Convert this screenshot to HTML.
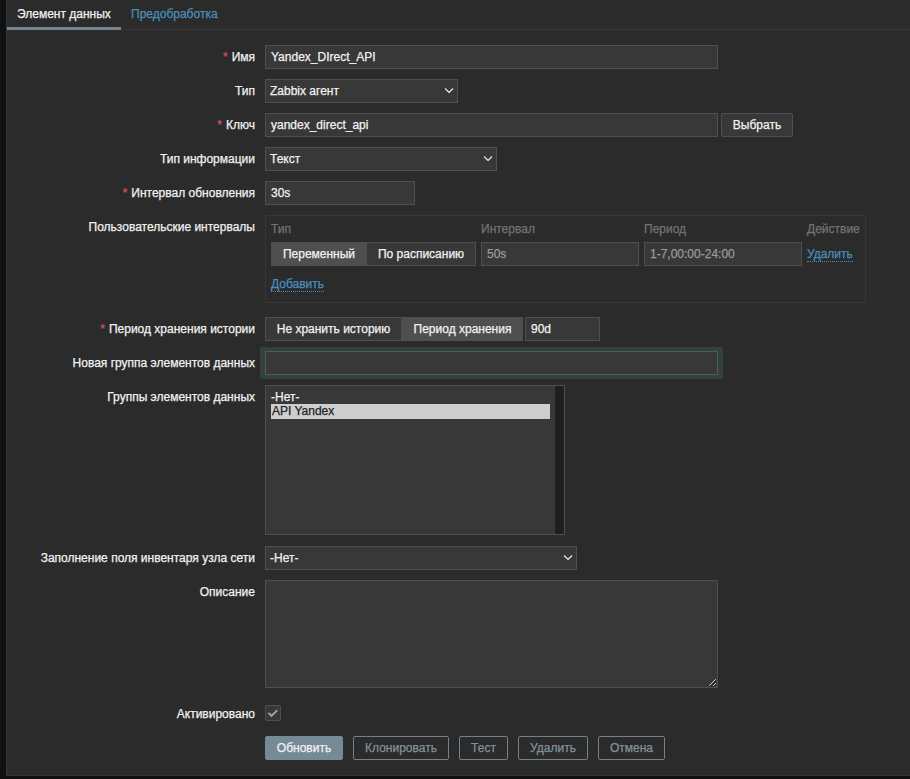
<!DOCTYPE html>
<html lang="ru"><head><meta charset="utf-8"><title>Элемент данных</title>
<style>
*{box-sizing:border-box;margin:0;padding:0}
html,body{width:910px;height:779px;overflow:hidden;background:#0e1012}
body{font-family:"Liberation Sans",Arial,sans-serif;font-size:12px;line-height:14px;color:#f2f2f2;position:relative;-webkit-text-stroke:0.25px}
.panel{position:absolute;left:6px;top:0;width:904px;height:776px;background:#2b2b2b;border-left:1px solid #353535;border-bottom:1px solid #353535}
.tabs{position:absolute;left:0;top:0;width:100%;height:30px;border-bottom:1px solid #383838}
.tab{position:absolute;top:0;height:30px;padding:7px 10px 0 10px;line-height:14px;white-space:nowrap}
.tab.act{border-bottom:3px solid #78868d;color:#f2f2f2}
.tab.lnk{color:#4a8fbc}
.lbl{position:absolute;right:655px;height:24px;line-height:24px;white-space:nowrap;text-align:right}
.lbl i{font-style:normal;color:#d05353;margin-right:4px}
.inp{position:absolute;height:24px;background:#383838;border:1px solid #4f4f4f;color:#f2f2f2;line-height:22px;padding:0 5px;white-space:nowrap;overflow:hidden}
.inp.ro{color:#9a9a9a}
.inp.sel{padding-left:4px}
.sel svg{position:absolute;right:3px;top:6px}
.btn{position:absolute;height:24px;line-height:22px;border:1px solid #70828b;color:#82929b;text-align:center;border-radius:2px;white-space:nowrap}
.btn.pri{background:#748a96;border-color:#748a96;color:#f2f2f2}
.btn.gry{background:#383838;border-color:#4f4f4f;color:#f2f2f2}
.seg{position:absolute;height:24px;line-height:22px;text-align:center;background:#383838;border:1px solid #4f4f4f;color:#f2f2f2;white-space:nowrap}
.seg.on{background:#4f4f4f;border-color:#4f4f4f}
.lnkd{position:absolute;color:#4a8fbc;border-bottom:1px dotted #4a8fbc;line-height:14px;white-space:nowrap}
.hd{position:absolute;color:#737373;line-height:14px;white-space:nowrap}
</style></head><body>
<div class="panel"></div>
<div class="tabs" style="left:7px;width:903px">
  <div class="tab act" style="left:0;width:114px">Элемент данных</div>
  <div class="tab lnk" style="left:114px">Предобработка</div>
</div>

<div class="lbl" style="top:45px"><i>*</i>Имя</div>
<div class="inp" style="left:265px;top:45px;width:453px">Yandex_DIrect_API</div>

<div class="lbl" style="top:79px">Тип</div>
<div class="inp sel" style="left:265px;top:79px;width:193px">Zabbix агент<svg width="10" height="10" viewBox="0 0 10 10"><path d="M1.1 2.5 L5.05 6.5 L9 2.5" fill="none" stroke="#f2f2f2" stroke-width="1.1"/></svg></div>

<div class="lbl" style="top:113px"><i>*</i>Ключ</div>
<div class="inp" style="left:265px;top:113px;width:453px">yandex_direct_api</div>
<div class="btn gry" style="left:721px;top:113px;width:72px">Выбрать</div>

<div class="lbl" style="top:147px">Тип информации</div>
<div class="inp sel" style="left:265px;top:147px;width:232px">Текст<svg width="10" height="10" viewBox="0 0 10 10"><path d="M1.1 2.5 L5.05 6.5 L9 2.5" fill="none" stroke="#f2f2f2" stroke-width="1.1"/></svg></div>

<div class="lbl" style="top:181px"><i>*</i>Интервал обновления</div>
<div class="inp" style="left:265px;top:181px;width:150px">30s</div>

<div class="lbl" style="top:215px">Пользовательские интервалы</div>
<div style="position:absolute;left:265px;top:215px;width:601px;height:88px;border:1px solid #383838"></div>
<div class="hd" style="left:271px;top:222px">Тип</div>
<div class="hd" style="left:481px;top:222px">Интервал</div>
<div class="hd" style="left:644px;top:222px">Период</div>
<div class="hd" style="left:807px;top:222px">Действие</div>
<div class="seg on" style="left:271px;top:242px;width:96px">Переменный</div>
<div class="seg" style="left:366px;top:242px;width:110px">По расписанию</div>
<div class="inp ro" style="left:481px;top:242px;width:158px">50s</div>
<div class="inp ro" style="left:644px;top:242px;width:158px">1-7,00:00-24:00</div>
<div class="lnkd" style="left:807px;top:247px">Удалить</div>
<div class="lnkd" style="left:271px;top:277px">Добавить</div>

<div class="lbl" style="top:317px"><i>*</i>Период хранения истории</div>
<div class="seg" style="left:265px;top:317px;width:137px">Не хранить историю</div>
<div class="seg on" style="left:402px;top:317px;width:121px">Период хранения</div>
<div class="inp" style="left:525px;top:317px;width:75px">90d</div>

<div class="lbl" style="top:351px">Новая группа элементов данных</div>
<div style="position:absolute;left:260px;top:347px;width:463px;height:32px;border-radius:2px;background:#33433c"></div>
<div class="inp" style="left:265px;top:351px;width:453px;border-color:#4a5f55"></div>

<div class="lbl" style="top:385px">Группы элементов данных</div>
<div class="inp" style="left:265px;top:385px;width:300px;height:150px;padding:0"></div>
<div style="position:absolute;left:271px;top:390px;line-height:15px">-Нет-</div>
<div style="position:absolute;left:271px;top:404px;width:279px;height:15px;background:#cecece;color:#222;line-height:15px;padding-left:1px">API Yandex</div>
<div style="position:absolute;left:555px;top:386px;width:9px;height:148px;background:#1f1f1f"></div>

<div class="lbl" style="top:546px">Заполнение поля инвентаря узла сети</div>
<div class="inp sel" style="left:265px;top:546px;width:312px">-Нет-<svg width="10" height="10" viewBox="0 0 10 10"><path d="M1.1 2.5 L5.05 6.5 L9 2.5" fill="none" stroke="#f2f2f2" stroke-width="1.1"/></svg></div>

<div class="lbl" style="top:580px">Описание</div>
<div class="inp" style="left:265px;top:580px;width:453px;height:108px"></div>
<svg style="position:absolute;left:707px;top:677px" width="10" height="10" viewBox="0 0 10 10"><path d="M4.2 8.8 L8.8 4.2" stroke="#1e1e1e" stroke-width="1" fill="none"/><path d="M2.2 8.8 L8.8 2.2 M6.2 8.8 L8.8 6.2" stroke="#d0d0d0" stroke-width="1" fill="none"/></svg>

<div class="lbl" style="top:702px">Активировано</div>
<div style="position:absolute;left:265px;top:705px;width:16px;height:16px;background:#383838;border:1px solid #4f4f4f;border-radius:2px"></div>
<svg style="position:absolute;left:265px;top:705px" width="16" height="16" viewBox="0 0 16 16"><path d="M3.6 7.9 L6.5 10.9 L12.2 5.3" fill="none" stroke="#9aa8ad" stroke-width="1.9"/></svg>

<div class="btn pri" style="left:265px;top:736px;width:78px">Обновить</div>
<div class="btn" style="left:353px;top:736px;width:96px">Клонировать</div>
<div class="btn" style="left:459px;top:736px;width:49px">Тест</div>
<div class="btn" style="left:518px;top:736px;width:70px">Удалить</div>
<div class="btn" style="left:598px;top:736px;width:67px">Отмена</div>
</body></html>
